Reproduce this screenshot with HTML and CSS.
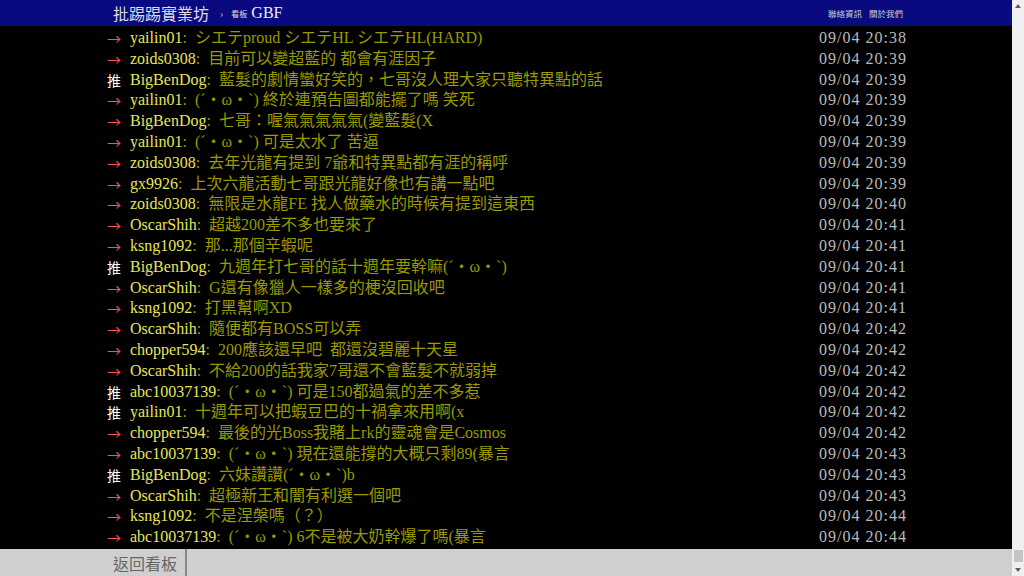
FILE: index.html
```html
<!DOCTYPE html>
<html lang="zh-Hant-TW">
<head>
    <meta charset="UTF-8">
    <meta name="viewport" content="width=device-width, initial-scale=1.0">
    <title>GBF - 批踢踢實業坊</title>
    <link rel="stylesheet" href="styles.css">
</head>
<body>
    <div class="page">
        <div class="main">
            <div class="topbar">
                <div class="topbar-inner">
                    <a class="logo">批踢踢實業坊</a>
                    <span class="crumb-sep">›</span>
                    <span class="board-label">看板</span>
                    <a class="board">GBF</a>
                    <div class="topbar-links">
                        <a>聯絡資訊</a>
                        <a>關於我們</a>
                    </div>
                </div>
            </div>

            <div class="push-list">
                <div class="container">
                    <div class="push"><span class="push-tag arrow">→</span><span class="push-userid">yailin01</span><span class="push-content">:&ensp;シエテproud シエテHL シエテHL(HARD)</span><span class="push-ipdatetime">09/04 20:38</span></div>
                    <div class="push"><span class="push-tag arrow">→</span><span class="push-userid">zoids0308</span><span class="push-content">:&ensp;目前可以變超藍的 都會有涯因子</span><span class="push-ipdatetime">09/04 20:39</span></div>
                    <div class="push"><span class="push-tag">推</span><span class="push-userid">BigBenDog</span><span class="push-content">:&ensp;藍髮的劇情蠻好笑的，七哥沒人理大家只聽特異點的話</span><span class="push-ipdatetime">09/04 20:39</span></div>
                    <div class="push"><span class="push-tag arrow">→</span><span class="push-userid">yailin01</span><span class="push-content">:&ensp;(´・ω・`) 終於連預告圖都能擺了嗎 笑死</span><span class="push-ipdatetime">09/04 20:39</span></div>
                    <div class="push"><span class="push-tag arrow">→</span><span class="push-userid">BigBenDog</span><span class="push-content">:&ensp;七哥：喔氣氣氣氣氣(變藍髮(X</span><span class="push-ipdatetime">09/04 20:39</span></div>
                    <div class="push"><span class="push-tag arrow">→</span><span class="push-userid">yailin01</span><span class="push-content">:&ensp;(´・ω・`) 可是太水了 苦逼</span><span class="push-ipdatetime">09/04 20:39</span></div>
                    <div class="push"><span class="push-tag arrow">→</span><span class="push-userid">zoids0308</span><span class="push-content">:&ensp;去年光龍有提到 7爺和特異點都有涯的稱呼</span><span class="push-ipdatetime">09/04 20:39</span></div>
                    <div class="push"><span class="push-tag arrow">→</span><span class="push-userid">gx9926</span><span class="push-content">:&ensp;上次六龍活動七哥跟光龍好像也有講一點吧</span><span class="push-ipdatetime">09/04 20:39</span></div>
                    <div class="push"><span class="push-tag arrow">→</span><span class="push-userid">zoids0308</span><span class="push-content">:&ensp;無限是水龍FE 找人做藥水的時候有提到這東西</span><span class="push-ipdatetime">09/04 20:40</span></div>
                    <div class="push"><span class="push-tag arrow">→</span><span class="push-userid">OscarShih</span><span class="push-content">:&ensp;超越200差不多也要來了</span><span class="push-ipdatetime">09/04 20:41</span></div>
                    <div class="push"><span class="push-tag arrow">→</span><span class="push-userid">ksng1092</span><span class="push-content">:&ensp;那...那個辛蝦呢</span><span class="push-ipdatetime">09/04 20:41</span></div>
                    <div class="push"><span class="push-tag">推</span><span class="push-userid">BigBenDog</span><span class="push-content">:&ensp;九週年打七哥的話十週年要幹嘛(´・ω・`)</span><span class="push-ipdatetime">09/04 20:41</span></div>
                    <div class="push"><span class="push-tag arrow">→</span><span class="push-userid">OscarShih</span><span class="push-content">:&ensp;G還有像獵人一樣多的梗沒回收吧</span><span class="push-ipdatetime">09/04 20:41</span></div>
                    <div class="push"><span class="push-tag arrow">→</span><span class="push-userid">ksng1092</span><span class="push-content">:&ensp;打黑幫啊XD</span><span class="push-ipdatetime">09/04 20:41</span></div>
                    <div class="push"><span class="push-tag arrow">→</span><span class="push-userid">OscarShih</span><span class="push-content">:&ensp;隨便都有BOSS可以弄</span><span class="push-ipdatetime">09/04 20:42</span></div>
                    <div class="push"><span class="push-tag arrow">→</span><span class="push-userid">chopper594</span><span class="push-content">:&ensp;200應該還早吧&nbsp; 都還沒碧麗十天星</span><span class="push-ipdatetime">09/04 20:42</span></div>
                    <div class="push"><span class="push-tag arrow">→</span><span class="push-userid">OscarShih</span><span class="push-content">:&ensp;不給200的話我家7哥還不會藍髮不就弱掉</span><span class="push-ipdatetime">09/04 20:42</span></div>
                    <div class="push"><span class="push-tag">推</span><span class="push-userid">abc10037139</span><span class="push-content">:&ensp;(´・ω・`) 可是150都過氣的差不多惹</span><span class="push-ipdatetime">09/04 20:42</span></div>
                    <div class="push"><span class="push-tag">推</span><span class="push-userid">yailin01</span><span class="push-content">:&ensp;十週年可以把蝦豆巴的十禍拿來用啊(x</span><span class="push-ipdatetime">09/04 20:42</span></div>
                    <div class="push"><span class="push-tag arrow">→</span><span class="push-userid">chopper594</span><span class="push-content">:&ensp;最後的光Boss我賭上rk的靈魂會是Cosmos</span><span class="push-ipdatetime">09/04 20:42</span></div>
                    <div class="push"><span class="push-tag arrow">→</span><span class="push-userid">abc10037139</span><span class="push-content">:&ensp;(´・ω・`) 現在還能撐的大概只剩89(暴言</span><span class="push-ipdatetime">09/04 20:43</span></div>
                    <div class="push"><span class="push-tag">推</span><span class="push-userid">BigBenDog</span><span class="push-content">:&ensp;六妹讚讚(´・ω・`)b</span><span class="push-ipdatetime">09/04 20:43</span></div>
                    <div class="push"><span class="push-tag arrow">→</span><span class="push-userid">OscarShih</span><span class="push-content">:&ensp;超極新王和闇有利選一個吧</span><span class="push-ipdatetime">09/04 20:43</span></div>
                    <div class="push"><span class="push-tag arrow">→</span><span class="push-userid">ksng1092</span><span class="push-content">:&ensp;不是涅槃嗎（？）</span><span class="push-ipdatetime">09/04 20:44</span></div>
                    <div class="push"><span class="push-tag arrow">→</span><span class="push-userid">abc10037139</span><span class="push-content">:&ensp;(´・ω・`) 6不是被大奶幹爆了嗎(暴言</span><span class="push-ipdatetime">09/04 20:44</span></div>
                </div>
            </div>

            <div class="action-bar">
                <div class="action-bar-inner">
                    <a class="btn">返回看板</a>
                </div>
            </div>
        </div>

        <div class="scrollbar">
            <div class="scroll-btn"><span class="tri-up"></span></div>
            <div class="scroll-track"></div>
            <div class="scroll-thumb"></div>
            <div class="scroll-btn"><span class="tri-down"></span></div>
        </div>
    </div>
</body>
</html>
```

FILE: styles.css
```css
html, body {
    margin: 0;
    padding: 0;
    height: 100%;
    overflow: hidden;
}
body {
    background-color: #000;
    color: #ccc;
    font-family: "Liberation Serif", "Noto Sans CJK TC", serif;
    font-size: 16px;
}
a {
    color: inherit;
    text-decoration: none;
}
.page {
    display: flex;
    height: 576px;
}
.main {
    flex: 1;
    display: flex;
    flex-direction: column;
    min-width: 0;
}

/* top bar */
.topbar {
    background-color: #0a0a80;
    height: 26px;
    flex-shrink: 0;
}
.topbar-inner {
    width: 800px;
    margin: 0 auto;
    height: 26px;
    display: flex;
    align-items: center;
    padding-left: 7px;
    box-sizing: border-box;
}
.logo {
    font-size: 16px;
    color: #ddd;
}
.crumb-sep {
    font-size: 10px;
    color: #bbb;
    margin: 0 8px 0 11px;
}
.board-label {
    font-size: 8px;
    color: #ddd;
    margin-right: 4px;
}
.board {
    font-size: 16px;
    color: #eee;
}
.topbar-links {
    margin-left: auto;
    margin-right: 3px;
    display: flex;
    gap: 7px;
    font-size: 8.5px;
    color: #ccc;
}

/* pushes */
.push-list {
    flex: 1;
    overflow: hidden;
    padding-top: 2px;
}
.container {
    width: 800px;
    margin: 0 auto;
}
.push {
    line-height: 20.8px;
    height: 20.8px;
    white-space: nowrap;
}
.push-tag {
    display: inline-block;
    vertical-align: top;
    height: 20.8px;
    line-height: 20.8px;
    width: 23px;
    padding-left: 1px;
    color: #fff;
    font-family: "Noto Sans CJK TC", sans-serif;
    font-size: 14px;
}
.push-tag.arrow {
    color: #e55;
}
.push-userid {
    color: #ff6;
    opacity: 0.9;
}
.push-content {
    color: #990;
}
.push-ipdatetime {
    float: right;
    color: #bbb;
    letter-spacing: 1px;
    margin-right: -1px;
}

/* bottom action bar */
.action-bar {
    background-color: #cfcfcf;
    height: 27px;
    flex-shrink: 0;
    margin-top: 1px;
}
.action-bar-inner {
    width: 800px;
    margin: 0 auto;
    height: 27px;
    display: flex;
}
.btn {
    display: flex;
    align-items: center;
    padding: 0 8px 0 7px;
    border-right: 2px solid #888;
    color: #666;
    font-size: 16px;
}

/* fake scrollbar */
.scrollbar {
    width: 12px;
    background-color: #f0f0f0;
    display: flex;
    flex-direction: column;
    align-items: center;
}
.scroll-btn {
    height: 12px;
    width: 12px;
    display: flex;
    align-items: center;
    justify-content: center;
}
.scroll-track {
    flex: 1;
}
.scroll-thumb {
    width: 9px;
    height: 12px;
    background-color: #c4c4c4;
    margin-bottom: 2px;
}
.tri-up {
    border-left: 3px solid transparent;
    border-right: 3px solid transparent;
    border-bottom: 4px solid #606060;
}
.tri-down {
    border-left: 3px solid transparent;
    border-right: 3px solid transparent;
    border-top: 4px solid #606060;
}
```
